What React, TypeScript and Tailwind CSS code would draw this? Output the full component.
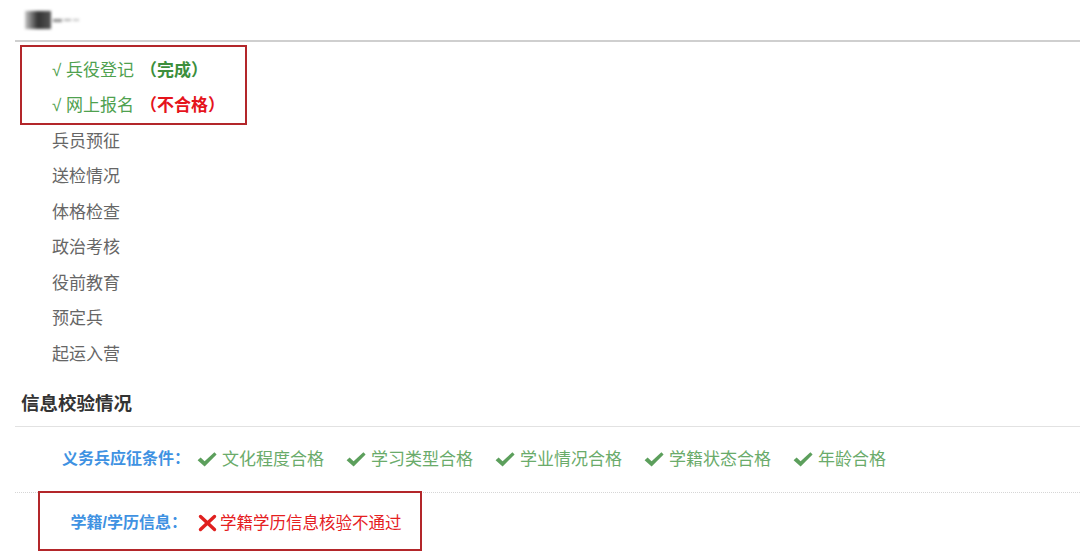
import React from "react";

const steps = ["兵员预征", "送检情况", "体格检查", "政治考核", "役前教育", "预定兵", "起运入营"];
const conditions = ["文化程度合格", "学习类型合格", "学业情况合格", "学籍状态合格", "年龄合格"];

const font = { fontFamily: '"Liberation Sans", "Noto Sans CJK SC", sans-serif' };

function CheckIcon() {
  return (
    <svg width="20" height="17" viewBox="0 0 20 17" className="shrink-0">
      <path d="M0.6 9.2 L3.6 6.4 L7.6 10.2 L17.4 1.2 L19.6 3.4 L7.6 15.6 Z" fill="#5c9f5c" />
    </svg>
  );
}

function CrossIcon() {
  return (
    <svg width="19" height="18" viewBox="0 0 19 18" className="shrink-0">
      <path d="M2.5 2.5 Q9 8.5 16.5 15.5" stroke="#e0201f" strokeWidth="3.4" fill="none" strokeLinecap="round" />
      <path d="M16.5 2.5 Q9.5 9 2.5 15.5" stroke="#e0201f" strokeWidth="3.4" fill="none" strokeLinecap="round" />
    </svg>
  );
}

export default function App() {
  return (
    <div className="h-[557px] w-[1080px] overflow-hidden bg-white" style={font}>
      {/* blurred logo */}
      <div className="flex h-[40px] items-center pl-[25px]">
        <div className="flex items-center gap-[2px] blur-[1.5px]">
          <div className="h-[18px] w-[26px] bg-gradient-to-r from-[#c8c8c8] via-[#333] to-[#555]" />
          <div className="h-[3px] w-[9px] bg-[#8a8a8a]" />
          <div className="h-[2px] w-[7px] bg-[#aaa]" />
          <div className="h-[2px] w-[6px] bg-[#c4c4c4]" />
        </div>
      </div>
      <div className="ml-[15px] h-[1.5px] bg-[#cfcfcf]" />

      <div className="pl-[52px] pt-[11px] text-[17px] text-[#666]">
        <div className="relative">
          <div className="pointer-events-none absolute left-[-32px] top-[-8px] h-[80px] w-[227px] border-[2.5px] border-[#b3262a]" />
          <div className="flex h-[35.56px] items-center text-[#4fa14f]">
            <span>√ 兵役登记</span>
            <span className="ml-[6px] font-bold text-[#3c8f3c]">（完成）</span>
          </div>
          <div className="flex h-[35.56px] items-center text-[#4fa14f]">
            <span>√ 网上报名</span>
            <span className="ml-[6px] font-bold text-[#e5141c]">（不合格）</span>
          </div>
        </div>
        {steps.map((s) => (
          <div key={s} className="flex h-[35.56px] items-center">
            {s}
          </div>
        ))}
      </div>

      <div className="ml-[15px] flex h-[55px] items-center border-b-[1.5px] border-[#e2e2e2] pl-[6px] pt-[8px] text-[18.5px] font-bold text-[#333]">
        信息校验情况
      </div>

      <div className="ml-[15px] flex h-[66px] items-center border-b border-dotted border-[#d6d6d6] pb-[1px]">
        <div className="w-[175px] text-right text-[16px] font-bold text-[#3f92e2]">义务兵应征条件：</div>
        <div className="ml-[7px] flex items-center gap-[22px]">
          {conditions.map((c) => (
            <div key={c} className="flex items-center gap-[5px]">
              <CheckIcon />
              <span className="text-[17px] text-[#6aab6a]">{c}</span>
            </div>
          ))}
        </div>
      </div>

      <div className="relative flex h-[59px] items-center">
        <div className="pointer-events-none absolute left-[38px] top-[-2px] h-[60px] w-[384px] border-[2.5px] border-[#b3262a]" />
        <div className="w-[187px] text-right text-[16px] font-bold text-[#3f92e2]">学籍/学历信息：</div>
        <div className="ml-[11px] flex items-center gap-[3px]">
          <CrossIcon />
          <span className="text-[16.5px] text-[#e5201f]">学籍学历信息核验不通过</span>
        </div>
      </div>
    </div>
  );
}
